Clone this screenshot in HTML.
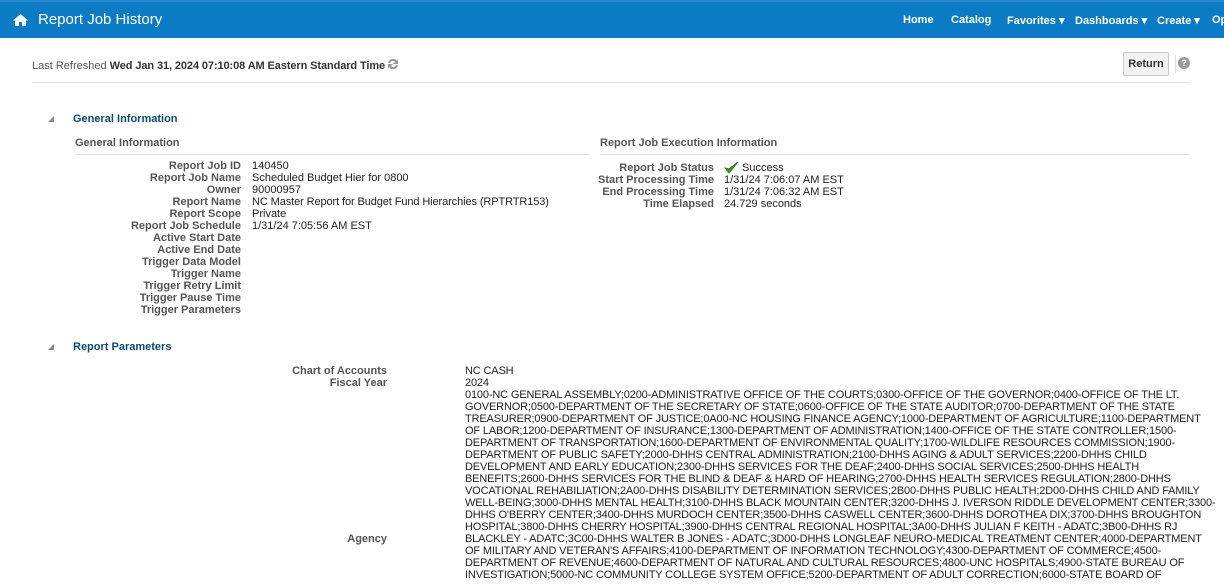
<!DOCTYPE html>
<html><head><meta charset="utf-8"><style>
*{margin:0;padding:0;box-sizing:border-box}
body{width:1224px;height:587px;overflow:hidden;background:#fff;font-family:"Liberation Sans",Arial,sans-serif;font-size:11px;color:#222;position:relative}
.hdr{position:absolute;left:0;top:0;width:1224px;height:38px;background:#0b7bc6;border-top:2px solid #2a8ad0}
.abs{position:absolute;white-space:nowrap}
.nav{color:#fff;font-weight:bold;font-size:11px;top:14px}
.lbl{position:absolute;text-align:right;color:#555;font-weight:bold;white-space:nowrap;line-height:12px}
.val{position:absolute;white-space:nowrap;line-height:12px;color:#222}
.sec{color:#0b4a73;font-weight:bold;font-size:11px}
.sub{color:#555;font-weight:bold;font-size:11px}
.tri{position:absolute;width:0;height:0;border-left:6px solid transparent;border-bottom:6px solid #888}
</style></head><body>
<div class="hdr"></div>
<svg class="abs" style="left:13px;top:14px" width="15" height="12" viewBox="0 0 15 12"><path d="M7.5 0L0 6.5h2V12h4V8h3v4h4V6.5h2z" fill="#fff"/></svg>
<div class="abs" style="left:38px;top:11px;color:#fff;font-size:15px">Report Job History</div>
<div class="abs nav" style="left:903px">Home</div>
<div class="abs nav" style="left:951px">Catalog</div>
<div class="abs nav" style="left:1007px">Favorites ▾</div>
<div class="abs nav" style="left:1075px">Dashboards ▾</div>
<div class="abs nav" style="left:1157px">Create ▾</div>
<div class="abs nav" style="left:1212px">Op</div>

<div class="abs" style="left:32px;top:60px;color:#555">Last Refreshed <b style="color:#333;letter-spacing:-0.1px">Wed Jan 31, 2024 07:10:08 AM Eastern Standard Time</b></div>
<svg class="abs" style="left:386px;top:57px" width="14" height="14" viewBox="0 0 14 14"><path d="M2 6a5 5 0 0 1 9-2l1-2v5H7l2-2a3 3 0 0 0-5 1zM12 8a5 5 0 0 1-9 2l-1 2V7h5l-2 2a3 3 0 0 0 5-1z" fill="#999"/></svg>
<div class="abs" style="left:1123px;top:52px;width:46px;height:24px;border:1px solid #c8c8c8;background:#f2f2f2;border-radius:2px;font-weight:bold;color:#333;text-align:center;line-height:22px">Return</div>
<div class="abs" style="left:1175px;top:55px;width:1px;height:18px;background:#ddd"></div>
<div class="abs" style="left:1178px;top:57px;width:12px;height:12px;border-radius:50%;background:#999;color:#fff;font-size:9px;font-weight:bold;text-align:center;line-height:12px">?</div>
<div class="abs" style="left:32px;top:82px;width:1158px;height:1px;background:#e5e5e5"></div>

<div class="tri" style="left:48px;top:116px"></div>
<div class="abs sec" style="left:73px;top:113px">General Information</div>
<div class="abs sub" style="left:75px;top:137px">General Information</div>
<div class="abs" style="left:75px;top:154px;width:515px;height:1px;background:#e2e2e2"></div>
<div class="abs sub" style="left:600px;top:137px">Report Job Execution Information</div>
<div class="abs" style="left:600px;top:154px;width:590px;height:1px;background:#e2e2e2"></div>

<div class="lbl" style="right:983px;top:160px">Report Job ID<br>Report Job Name<br>Owner<br>Report Name<br>Report Scope<br>Report Job Schedule<br>Active Start Date<br>Active End Date<br>Trigger Data Model<br>Trigger Name<br>Trigger Retry Limit<br>Trigger Pause Time<br>Trigger Parameters</div>
<div class="val" style="left:252px;top:160px">140450<br>Scheduled Budget Hier for 0800<br>90000957<br><span style="letter-spacing:-0.1px">NC Master Report for Budget Fund Hierarchies (RPTRTR153)</span><br>Private<br>1/31/24 7:05:56 AM EST</div>

<div class="lbl" style="right:510px;top:162px">Report Job Status<br>Start Processing Time<br>End Processing Time<br>Time Elapsed</div>
<svg class="abs" style="left:724px;top:161px" width="15" height="13" viewBox="0 0 15 13"><path d="M1 7l4 5L14 1 5 8z" fill="#3a9a2a" stroke="#2a7a1a" stroke-width="1"/></svg>
<div class="val" style="left:742px;top:162px">Success</div>
<div class="val" style="left:724px;top:174px">1/31/24 7:06:07 AM EST<br>1/31/24 7:06:32 AM EST<br>24.729 seconds</div>

<div class="tri" style="left:48px;top:344px"></div>
<div class="abs sec" style="left:73px;top:341px">Report Parameters</div>

<div class="lbl" style="right:837px;top:365px">Chart of Accounts<br>Fiscal Year</div>
<div class="lbl" style="right:837px;top:533px">Agency</div>
<div class="val" style="left:465px;top:365px;letter-spacing:-0.15px">NC CASH<br>2024<br>0100-NC GENERAL ASSEMBLY;0200-ADMINISTRATIVE OFFICE OF THE COURTS;0300-OFFICE OF THE GOVERNOR;0400-OFFICE OF THE LT.<br>GOVERNOR;0500-DEPARTMENT OF THE SECRETARY OF STATE;0600-OFFICE OF THE STATE AUDITOR;0700-DEPARTMENT OF THE STATE<br>TREASURER;0900-DEPARTMENT OF JUSTICE;0A00-NC HOUSING FINANCE AGENCY;1000-DEPARTMENT OF AGRICULTURE;1100-DEPARTMENT<br>OF LABOR;1200-DEPARTMENT OF INSURANCE;1300-DEPARTMENT OF ADMINISTRATION;1400-OFFICE OF THE STATE CONTROLLER;1500-<br>DEPARTMENT OF TRANSPORTATION;1600-DEPARTMENT OF ENVIRONMENTAL QUALITY;1700-WILDLIFE RESOURCES COMMISSION;1900-<br>DEPARTMENT OF PUBLIC SAFETY;2000-DHHS CENTRAL ADMINISTRATION;2100-DHHS AGING &amp; ADULT SERVICES;2200-DHHS CHILD<br>DEVELOPMENT AND EARLY EDUCATION;2300-DHHS SERVICES FOR THE DEAF;2400-DHHS SOCIAL SERVICES;2500-DHHS HEALTH<br>BENEFITS;2600-DHHS SERVICES FOR THE BLIND &amp; DEAF &amp; HARD OF HEARING;2700-DHHS HEALTH SERVICES REGULATION;2800-DHHS<br>VOCATIONAL REHABILIATION;2A00-DHHS DISABILITY DETERMINATION SERVICES;2B00-DHHS PUBLIC HEALTH;2D00-DHHS CHILD AND FAMILY<br>WELL-BEING;3000-DHHS MENTAL HEALTH;3100-DHHS BLACK MOUNTAIN CENTER;3200-DHHS J. IVERSON RIDDLE DEVELOPMENT CENTER;3300-<br>DHHS O'BERRY CENTER;3400-DHHS MURDOCH CENTER;3500-DHHS CASWELL CENTER;3600-DHHS DOROTHEA DIX;3700-DHHS BROUGHTON<br>HOSPITAL;3800-DHHS CHERRY HOSPITAL;3900-DHHS CENTRAL REGIONAL HOSPITAL;3A00-DHHS JULIAN F KEITH - ADATC;3B00-DHHS RJ<br>BLACKLEY - ADATC;3C00-DHHS WALTER B JONES - ADATC;3D00-DHHS LONGLEAF NEURO-MEDICAL TREATMENT CENTER;4000-DEPARTMENT<br>OF MILITARY AND VETERAN'S AFFAIRS;4100-DEPARTMENT OF INFORMATION TECHNOLOGY;4300-DEPARTMENT OF COMMERCE;4500-<br>DEPARTMENT OF REVENUE;4600-DEPARTMENT OF NATURAL AND CULTURAL RESOURCES;4800-UNC HOSPITALS;4900-STATE BUREAU OF<br>INVESTIGATION;5000-NC COMMUNITY COLLEGE SYSTEM OFFICE;5200-DEPARTMENT OF ADULT CORRECTION;6000-STATE BOARD OF</div>
</body></html>
